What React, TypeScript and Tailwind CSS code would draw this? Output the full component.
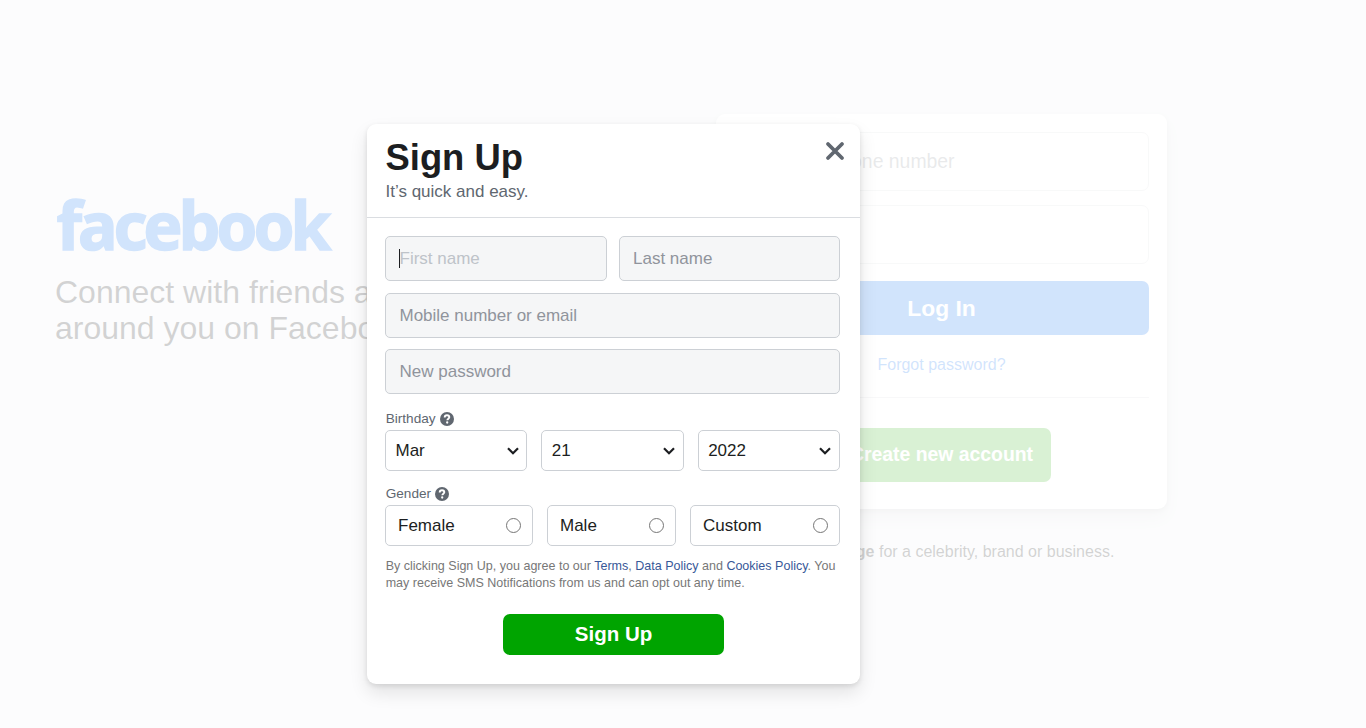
import React from 'react';

const birthday = ['Mar', '21', '2022'];

const genders = [
  { label: 'Female', width: 'w-[148px]' },
  { label: 'Male', width: 'w-[129px]' },
  { label: 'Custom', width: 'w-[150px]' },
];

const inputClass =
  'block h-[45px] w-full rounded-[5px] border border-[#ccd0d5] bg-[#f5f6f7] px-[13.5px] text-[17px] text-[#1c1e21] outline-none';

const Chevron = () => (
  <svg className="h-[8px] w-[12px]" viewBox="0 0 12 8" fill="none" stroke="#1c1e21" strokeWidth="2.2">
    <path d="M1 1.2l5 5 5-5" />
  </svg>
);

const HelpIcon = () => (
  <svg className="mb-px h-[14px] w-[14px]" viewBox="0 0 14 14" fill="none">
    <circle cx="7" cy="7" r="7" fill="#606770" />
    <path
      d="M4.7 5.4c0-1.4 1-2.2 2.3-2.2s2.3.8 2.3 2c0 1.4-2 1.6-2 3.1"
      stroke="#fff"
      strokeWidth="1.9"
    />
    <circle cx="7.2" cy="10.5" r="1.15" fill="#fff" />
  </svg>
);

const LoginPage = () => (
  <div className="flex items-start pl-[55px]">
    <div className="w-[661px] pt-[154px]">
      <svg className="block h-[120px] w-[300px]" viewBox="0 0 300 120" role="img">
        <text
          x="1.5"
          y="95.5"
          textLength="275"
          lengthAdjust="spacing"
          className="fill-[#1877f2] stroke-[#1877f2] stroke-[1.5] font-['Noto_Sans',sans-serif] text-[66px] font-bold"
        >
          facebook
        </text>
      </svg>
      <h2 className="w-[560px] text-[32px] leading-[36px] text-[#1c1e21]">
        Connect with friends and the world around you on Facebook.
      </h2>
    </div>

    <div className="pt-[114px]">
      <div className="flex h-[395px] w-[451px] flex-col items-center rounded-[9px] bg-white px-[18px] pt-[18px] shadow-[0_2px_5px_rgba(0,0,0,0.1),0_9px_18px_rgba(0,0,0,0.1)]">
        <input
          className="h-[59px] w-full rounded-[7px] border border-[#dddfe2] px-[18px] text-[19.4px] placeholder:text-[#90949c]"
          placeholder="Email or phone number"
        />
        <input
          className="mt-[14px] h-[59px] w-full rounded-[7px] border border-[#dddfe2] px-[18px] text-[19.4px] placeholder:text-[#90949c]"
          placeholder="Password"
        />
        <button className="mt-[17px] h-[54px] w-full rounded-[7px] bg-[#1877f2] text-[22.8px] font-bold text-white">
          Log In
        </button>
        <a className="mt-[18px] text-[16px] leading-[23px] text-[#1877f2]">Forgot password?</a>
        <div className="mt-[21px] h-px w-full bg-[#dadde1]" />
        <button className="mt-[30px] h-[54px] w-[219px] rounded-[7px] bg-[#42b72a] text-[19.4px] font-bold text-white">
          Create new account
        </button>
      </div>
      <p className="mt-[31px] text-center text-[16px] leading-[23px] text-[#1c1e21]">
        <b>Create a Page</b> for a celebrity, brand or business.
      </p>
    </div>
  </div>
);

const SignUpDialog = () => (
  <div className="absolute top-[124px] left-[367px] h-[560px] w-[493px] rounded-[9px] bg-white shadow-[0_2px_5px_rgba(0,0,0,0.1),0_9px_18px_rgba(0,0,0,0.1)]">
    <div className="flex h-[94px] justify-between border-b border-[#dadde1] pr-[15.5px] pl-[18.5px]">
      <div>
        <h1 className="pt-[12px] text-[36.4px] leading-[43px] font-bold text-[#1c1e21]">Sign Up</h1>
        <p className="text-[17px] leading-[26px] text-[#606770]">It’s quick and easy.</p>
      </div>
      <svg className="mt-[17px] h-[20px] w-[20px]" viewBox="0 0 20 20" stroke="#606770" strokeWidth="3.8" strokeLinecap="round">
        <path d="M3 3l14 14M17 3L3 17" />
      </svg>
    </div>

    <form className="pt-[18px] pr-[20px] pl-[18px]">
      <div className="grid grid-cols-2 gap-[12px]">
        <div className="relative">
          <input className={`${inputClass} placeholder:text-[#bec3c9]`} placeholder="First name" />
          <span className="absolute top-[13px] left-[14px] h-[19px] w-px bg-[#1c1e21]" />
        </div>
        <input className={`${inputClass} placeholder:text-[#90949c]`} placeholder="Last name" />
      </div>
      <input className={`${inputClass} mt-[12px] placeholder:text-[#90949c]`} placeholder="Mobile number or email" />
      <input className={`${inputClass} mt-[11px] placeholder:text-[#90949c]`} placeholder="New password" />

      <div className="mt-[15px] flex h-[21px] items-center gap-[4px] pl-[0.7px] text-[13.6px] text-[#606770]">
        Birthday <HelpIcon />
      </div>
      <div className="grid grid-cols-3 gap-[14px]">
        {birthday.map((value) => (
          <div
            key={value}
            className="flex h-[41px] items-center justify-between rounded-[5px] border border-[#ccd0d5] pr-[7.5px] pl-[9.5px] text-[17px] text-[#1c1e21]"
          >
            {value}
            <Chevron />
          </div>
        ))}
      </div>

      <div className="mt-[12px] flex h-[22px] items-center gap-[4px] pl-[0.7px] text-[13.6px] text-[#606770]">
        Gender <HelpIcon />
      </div>
      <div className="flex justify-between">
        {genders.map(({ label, width }) => (
          <label
            key={label}
            className={`flex h-[41px] items-center justify-between rounded-[5px] border border-[#ccd0d5] pr-[11px] pl-[12px] text-[17px] text-[#1c1e21] ${width}`}
          >
            {label}
            <span className="h-[15px] w-[15px] rounded-full border border-[#767676]" />
          </label>
        ))}
      </div>

      <p className="mt-[12px] pl-[0.7px] text-[12.53px] leading-[17px] whitespace-nowrap text-[#777]">
        By clicking Sign Up, you agree to our <a className="text-[#385898]">Terms</a>,{' '}
        <a className="text-[#385898]">Data Policy</a> and <a className="text-[#385898]">Cookies Policy</a>. You
        <br />
        may receive SMS Notifications from us and can opt out any time.
      </p>

      <button
        type="button"
        className="mt-[22px] ml-[118px] block h-[41px] w-[221px] rounded-[7px] bg-[#00a400] text-[20.5px] font-bold text-white"
      >
        Sign Up
      </button>
    </form>
  </div>
);

const App: React.FC = () => {
  return (
    <div className="relative h-[728px] w-[1366px] overflow-hidden bg-[#f0f2f5] font-['Liberation_Sans',Arial,sans-serif]">
      <LoginPage />
      <div className="absolute inset-0 bg-white/80" />
      <SignUpDialog />
    </div>
  );
};

export default App;
